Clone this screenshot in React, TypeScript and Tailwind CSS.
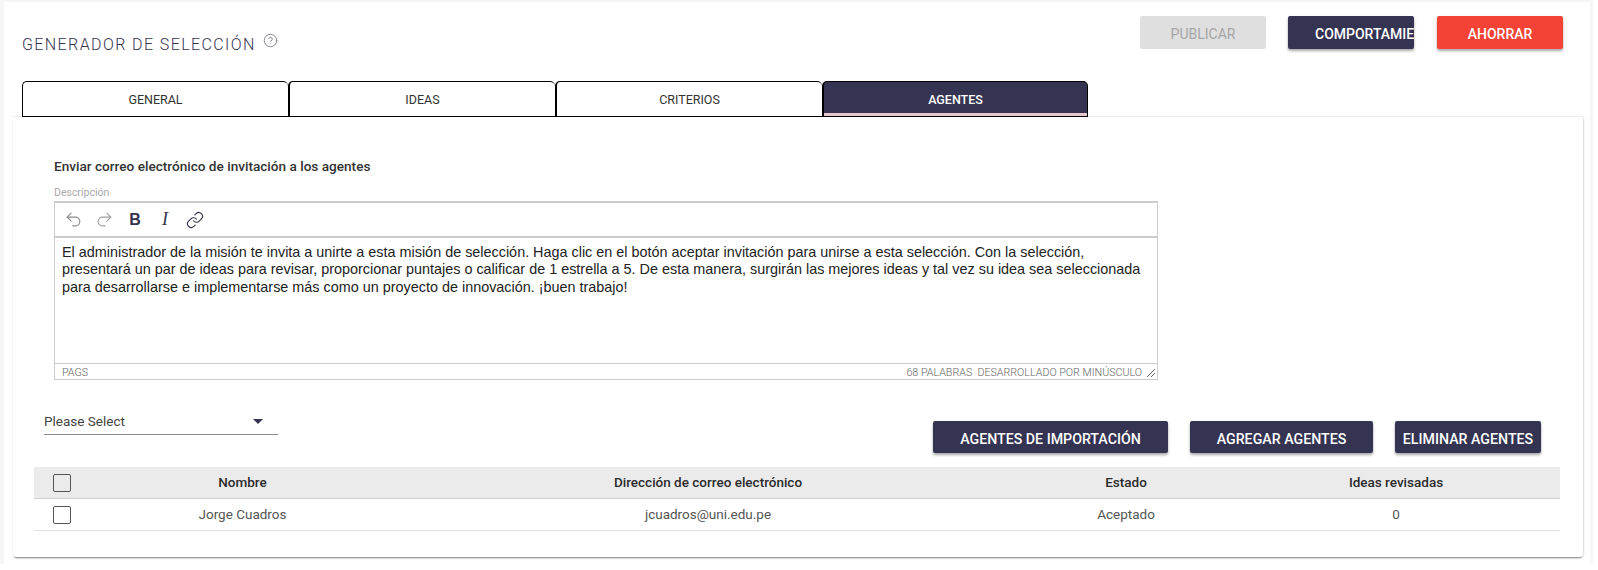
import React from "react";
import { CircleHelp, Link, Undo2, Redo2 } from "lucide-react";

const roboto = "font-['Roboto',sans-serif]";

function Tab({ label, active, first }: { label: string; active?: boolean; first?: boolean }) {
  return (
    <div
      className={
        "relative flex h-[36px] items-center justify-center rounded-t-[5px] border-t border-b text-[12.5px] border-black " +
        (first ? "w-[266px] border-l " : active ? "w-[266px] border-l-2 " : "w-[267px] border-l-2 ") +
        (active ? "border-r bg-[#343352] font-medium text-white" : "bg-white text-[#333333]")
      }
    >
      <span className="mt-[3px]">{label}</span>
      {active && <div className="absolute bottom-0 left-0 right-0 h-[3px] bg-[#e6c6ca]" />}
    </div>
  );
}

function TopButton({ children, className }: { children: React.ReactNode; className: string }) {
  return (
    <div className={"flex h-[33px] w-[126px] items-center overflow-hidden whitespace-nowrap rounded-[2px] pt-[3px] text-[14px] " + className}>
      {children}
    </div>
  );
}

function ActionButton({ children, width }: { children: React.ReactNode; width: string }) {
  return (
    <div className={"flex h-[32px] items-center justify-center whitespace-nowrap rounded-[2px] bg-[#343352] pt-[5px] text-[14.2px] font-medium text-white shadow-[0_2px_3px_rgba(0,0,0,0.35)] " + width}>
      {children}
    </div>
  );
}

function Check() {
  return <div className="h-[18px] w-[18px] rounded-[2px] border border-[#555555] bg-transparent" />;
}

const gridCols = "grid grid-cols-[55px_307px_624px_212px_328px] items-center text-center";

export default function App() {
  return (
    <div className={"h-[570px] w-[1598px] overflow-hidden bg-white " + roboto}>
      <div className="mr-[5px] h-[564px] border-l-4 border-r-[3px] border-t-2 border-[#f6f6f6] bg-white">
        <div className="flex h-[79px] items-start justify-between pl-[18px] pr-[27px] pt-[14px]">
          <div className="flex items-start pt-[19px]">
            <span className="text-[16px] font-light leading-[20px] tracking-[1.4px] text-[#343352]">GENERADOR DE SELECCIÓN</span>
            <CircleHelp size={15} strokeWidth={1.2} className="ml-[7px] mt-[-2px] text-[#66657a]" />
          </div>
          <div className="flex gap-[22px]">
            <TopButton className="justify-center bg-[#dfdfdf] text-[#a6a6a6]">PUBLICAR</TopButton>
            <TopButton className="bg-[#343352] pl-[27px] font-medium text-white shadow-[0_2px_3px_rgba(0,0,0,0.35)]">COMPORTAMIENTO</TopButton>
            <TopButton className="ml-px justify-center bg-[#f44336] font-medium text-white shadow-[0_2px_3px_rgba(0,0,0,0.35)]">AHORRAR</TopButton>
          </div>
        </div>

        <div className="flex pl-[18px]">
          <Tab label="GENERAL" first />
          <Tab label="IDEAS" />
          <Tab label="CRITERIOS" />
          <Tab label="AGENTES" active />
        </div>

        <div className="ml-[9px] h-[440px] w-[1570px] rounded-b-[3px] bg-white pt-[41px] shadow-[0_2px_2px_-1px_rgba(0,0,0,0.5),1px_0_2px_rgba(0,0,0,0.12),0_-1px_1px_rgba(0,0,0,0.04)]">
          <div className="ml-[41px] text-[13.6px] font-medium leading-[16px] text-[#333333]">Enviar correo electrónico de invitación a los agentes</div>
          <div className="ml-[41px] mt-[12px] text-[10.5px] leading-[14px] text-[#aaaaaa]">Descripción</div>

          <div className="ml-[41px] mt-[1px] w-[1104px] border border-t-2 border-[#cccccc]">
            <div className="flex h-[35px] items-center border-b-2 border-[#cccccc] pl-[3px]">
              <div className="flex w-[31px] justify-center"><Undo2 size={19} strokeWidth={1.4} className="text-[#8c8c8c]" /></div>
              <div className="flex w-[31px] justify-center"><Redo2 size={19} strokeWidth={1.4} className="text-[#a0a0a0]" /></div>
              <div className="flex w-[30px] justify-center font-['Liberation_Sans',sans-serif] text-[16px] font-bold text-[#33334d]">B</div>
              <div className="flex w-[30px] justify-center font-['Liberation_Serif',serif] text-[18px] italic text-[#33334d]">I</div>
              <div className="flex w-[29px] justify-center"><Link size={18} strokeWidth={1.5} className="text-[#33334d]" /></div>
            </div>
            <div className="h-[125px] px-[7px] pt-[6px] font-['Liberation_Sans',sans-serif] text-[14.4px] leading-[17.3px] text-[#222222]">
              El administrador de la misión te invita a unirte a esta misión de selección. Haga clic en el botón aceptar invitación para unirse a esta selección. Con la selección, presentará un par de ideas para revisar, proporcionar puntajes o calificar de 1 estrella a 5. De esta manera, surgirán las mejores ideas y tal vez su idea sea seleccionada para desarrollarse e implementarse más como un proyecto de innovación. ¡buen trabajo!
            </div>
            <div className="flex h-[16px] items-center justify-between border-t border-[#cccccc] pl-[7px] pr-[1px] text-[10.7px] font-light text-[#666666]">
              <span className="mt-[3px]">PAGS</span>
              <div className="flex items-center">
                <span className="mt-[3px] whitespace-pre">68 PALABRAS  DESARROLLADO POR MINÚSCULO</span>
                <svg width="10" height="10" viewBox="0 0 10 10" className="ml-[4px] mt-[3px]" stroke="#666666" strokeWidth="1" fill="none">
                  <path d="M1 9 L9 1 M5 9 L9 5" />
                </svg>
              </div>
            </div>
          </div>

          <div className="ml-[31px] mt-[28px] flex h-[45px] items-start">
            <div className="flex h-[27px] w-[234px] items-start justify-between border-b border-[#8c8c8c] pr-[15px] pt-[5px] text-[13.5px] leading-[16px] text-[#444444]">
              <span>Please Select</span>
              <div className="mt-[6px] h-0 w-0 border-x-[5px] border-t-[5px] border-x-transparent border-t-[#343352]" />
            </div>
            <div className="ml-[655px] mt-[13px] flex gap-[22px]">
              <ActionButton width="w-[235px]">AGENTES DE IMPORTACIÓN</ActionButton>
              <ActionButton width="w-[183px]">AGREGAR AGENTES</ActionButton>
              <ActionButton width="w-[146px]">ELIMINAR AGENTES</ActionButton>
            </div>
          </div>

          <div className="ml-[21px] mt-[14px] w-[1526px] text-[13.5px]">
            <div className={gridCols + " h-[32px] border-b border-[#d0d0d0] bg-[#ebebeb] font-medium text-[#2b2b2b]"}>
              <div className="flex justify-center pl-[1px]"><Check /></div>
              <div>Nombre</div>
              <div>Dirección de correo electrónico</div>
              <div>Estado</div>
              <div>Ideas revisadas</div>
            </div>
            <div className={gridCols + " h-[32px] border-b border-[#e0e0e0] text-[#555555]"}>
              <div className="flex justify-center pl-[1px]"><Check /></div>
              <div>Jorge Cuadros</div>
              <div>jcuadros@uni.edu.pe</div>
              <div>Aceptado</div>
              <div>0</div>
            </div>
          </div>
        </div>
      </div>
    </div>
  );
}
